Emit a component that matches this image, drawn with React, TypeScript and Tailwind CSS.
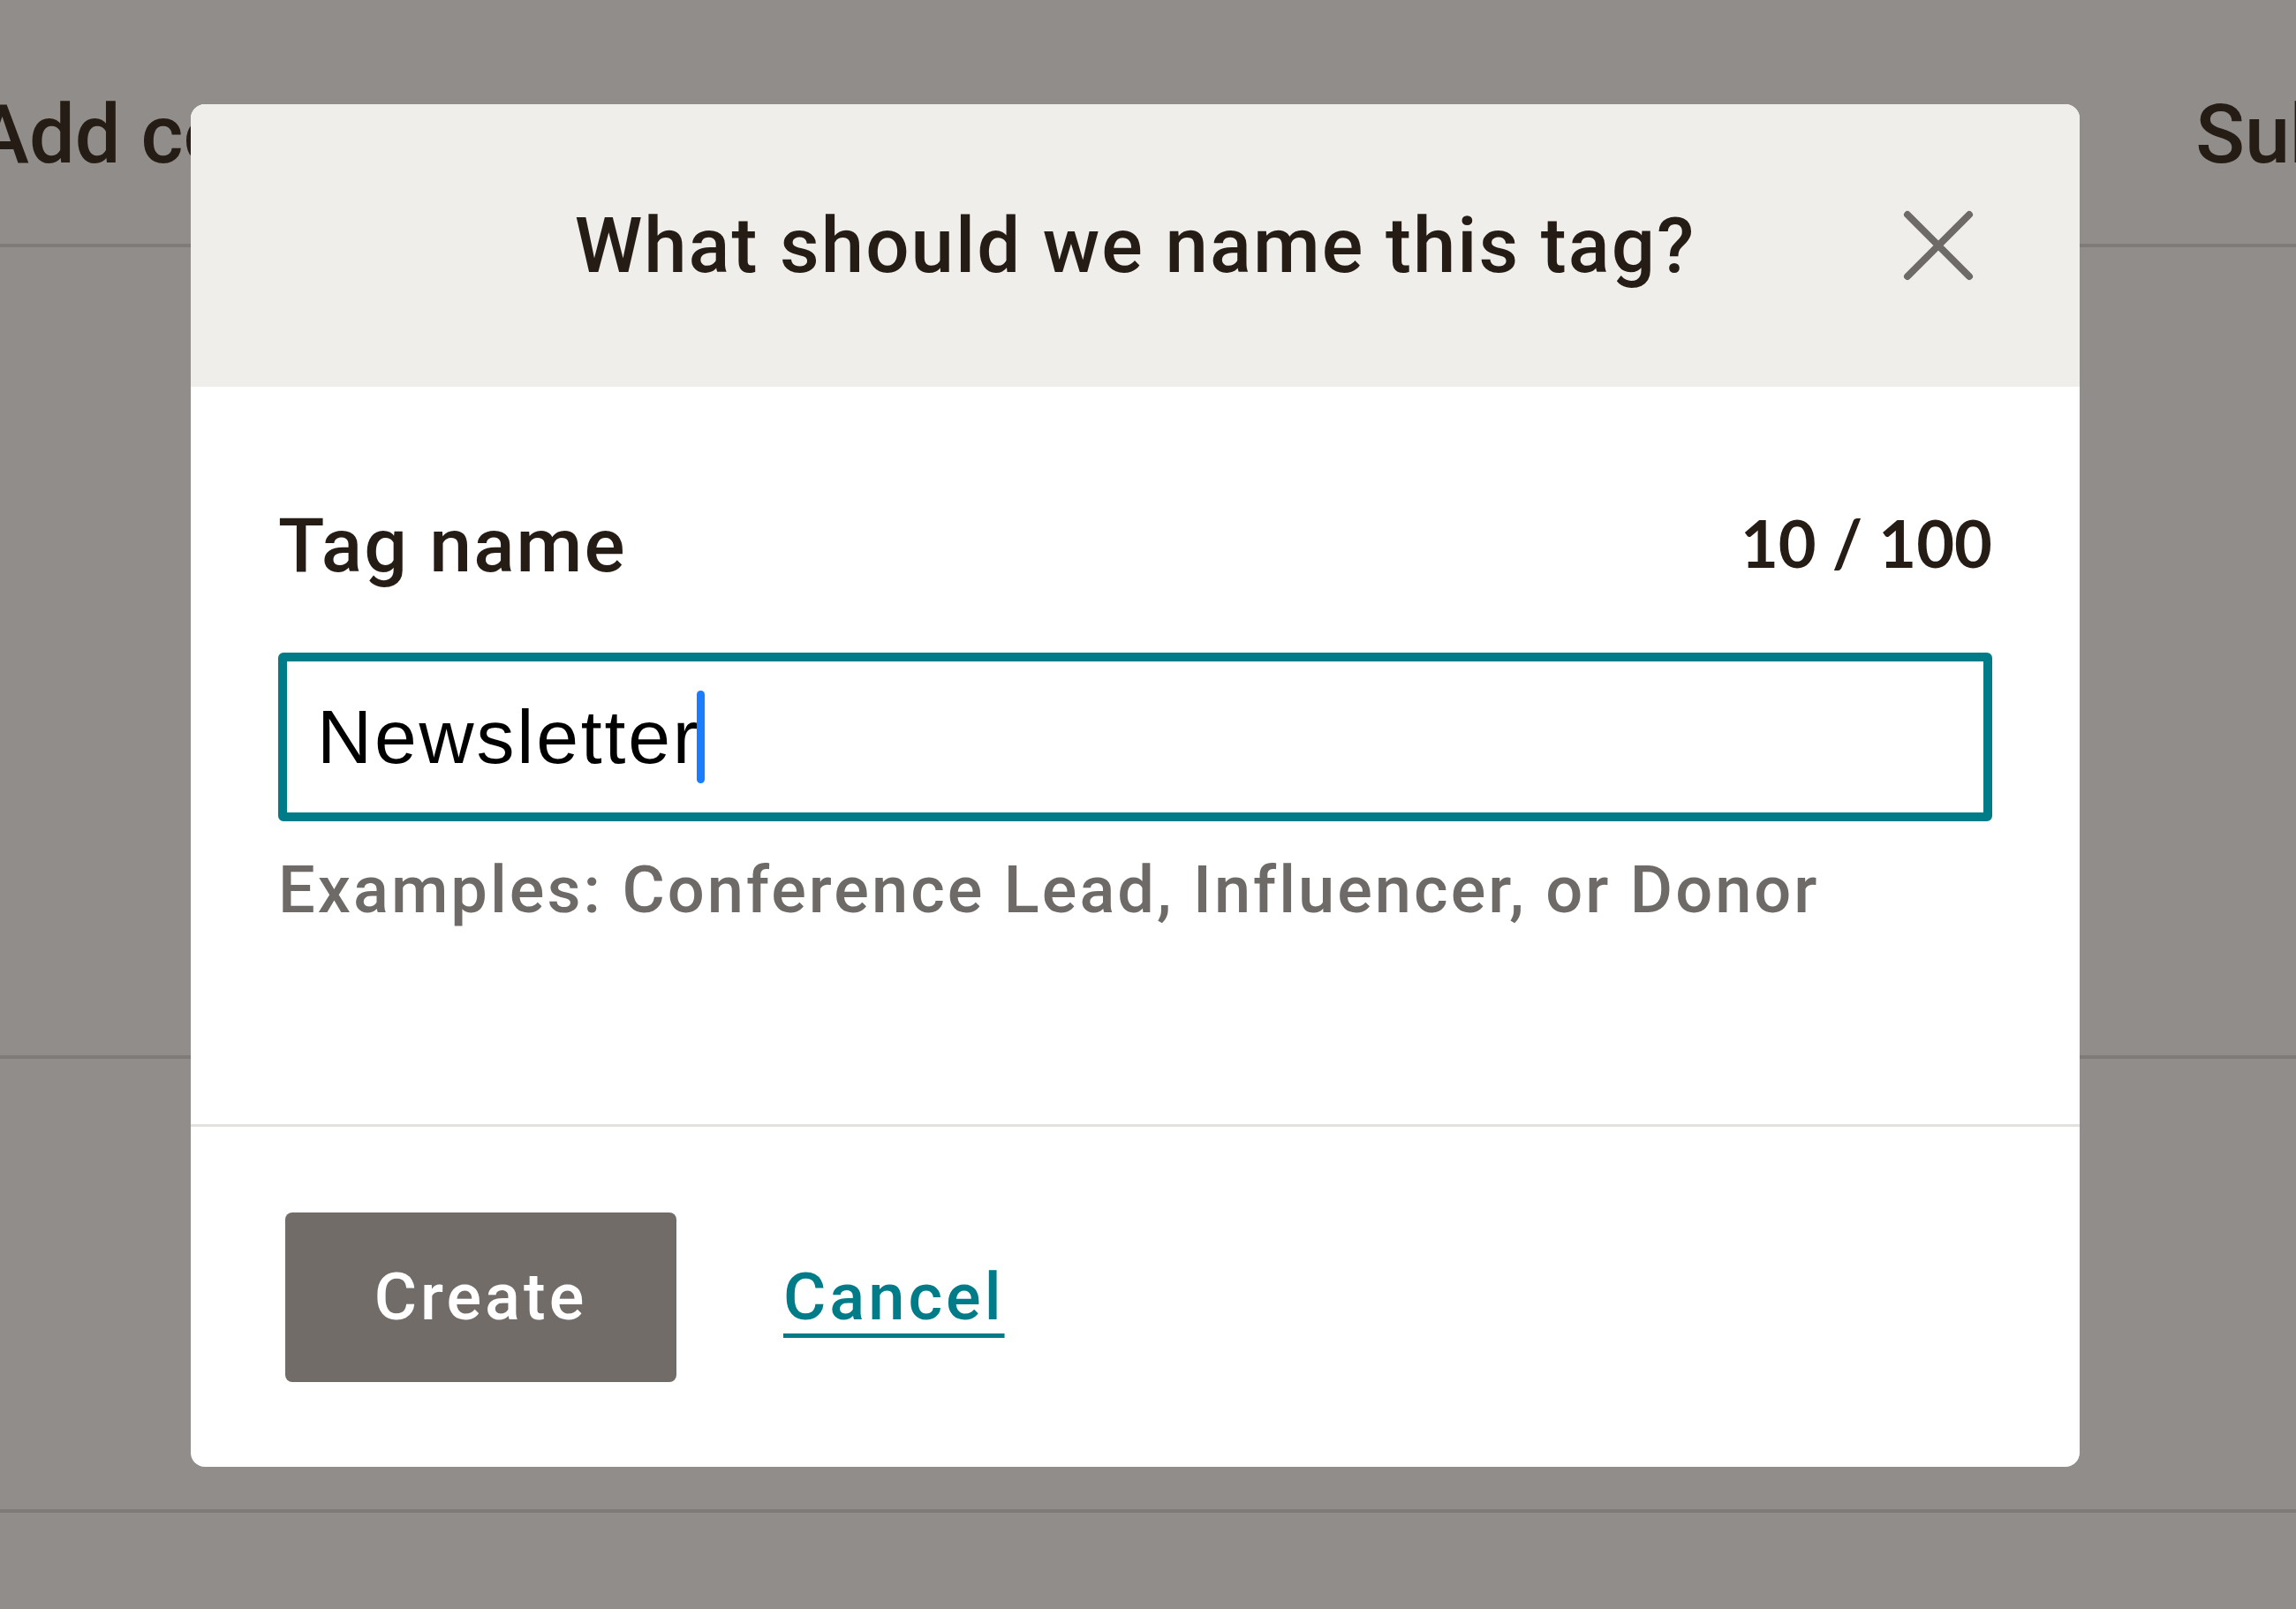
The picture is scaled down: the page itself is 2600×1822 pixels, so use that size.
const sans = "font-['Roboto','Liberation_Sans',sans-serif]";

function CloseIcon() {
  return (
    <svg width="80" height="80" viewBox="0 0 80 80" fill="none">
      <path
        d="M5 5 L75 75 M75 5 L5 75"
        stroke="#6e6a67"
        strokeWidth="8"
        strokeLinecap="round"
      />
    </svg>
  );
}

function TagDialog() {
  return (
    <div className="absolute left-[216px] top-[118px] w-[2139px] rounded-[16px] overflow-hidden bg-white flex flex-col">
      {/* header */}
      <div className="h-[320px] bg-[#efeeea] grid grid-cols-[1fr_auto_1fr] items-center">
        <div />
        <h2 className="text-[87px] font-medium tracking-[2px] text-[#241c15] whitespace-nowrap">
          What should we name this tag?
        </h2>
        <div className="flex justify-end pr-[120px]">
          <button aria-label="Close">
            <CloseIcon />
          </button>
        </div>
      </div>

      {/* body */}
      <div className="h-[835px] px-[99px] pt-[130px] flex flex-col">
        <div className="flex justify-between items-baseline leading-[100px]">
          <label className="text-[86px] font-medium tracking-[2px] text-[#241c15]">
            Tag name
          </label>
          <span className="text-[74px] font-bold text-[#241c15] font-['Lato',sans-serif] -translate-y-[4px]">
            10 / 100
          </span>
        </div>
        <div className="mt-[70px] h-[191px] border-[10px] border-[#007c89] rounded-[6px] flex items-center pl-[34px]">
          <span className="text-[86px] tracking-[2.8px] text-black font-['Liberation_Sans',sans-serif]">
            Newsletter
          </span>
          <span className="w-[9px] h-[105px] ml-[-4px] rounded-full bg-[#1a7cff]" />
        </div>
        <p className="mt-[22px] text-[74px] font-medium tracking-[3px] text-[#6e6a67] whitespace-nowrap">
          Examples: Conference Lead, Influencer, or Donor
        </p>
      </div>

      <div className="h-[3px] bg-[#e3e1de]" />

      {/* footer */}
      <div className="h-[385px] flex items-center pl-[107px] gap-[121px]">
        <button className="w-[443px] h-[192px] rounded-[8px] bg-[#716c68] text-white text-[74px] font-medium tracking-[4px]">
          Create
        </button>
        <a
          href="#"
          className="text-[74px] font-medium tracking-[4px] text-[#007c89] underline decoration-[5px] underline-offset-[16px]"
        >
          Cancel
        </a>
      </div>
    </div>
  );
}

export default function App() {
  return (
    <div className={`relative w-[2600px] h-[1822px] overflow-hidden bg-[#918d8a] ${sans}`}>
      <div className="flex flex-col">
        <div className="h-[280px] border-b-[4px] border-[#7f7b78] flex items-start pt-[84px] text-[92px] font-medium text-[#241c15] whitespace-nowrap">
          <span className="ml-[-28px]">Add contacts</span>
          <span className="ml-[560px] mt-[31px] w-[4px] h-[6px] bg-[#241c15]" />
          <span className="ml-[1069px] mt-[31px] w-[4px] h-[6px] bg-[#241c15]" />
          <span className="ml-[340px]">Subscribers</span>
        </div>
        <div className="h-[919px] border-b-[4px] border-[#7f7b78]" />
        <div className="h-[514px] border-b-[4px] border-[#7f7b78]" />
      </div>
      <TagDialog />
    </div>
  );
}
